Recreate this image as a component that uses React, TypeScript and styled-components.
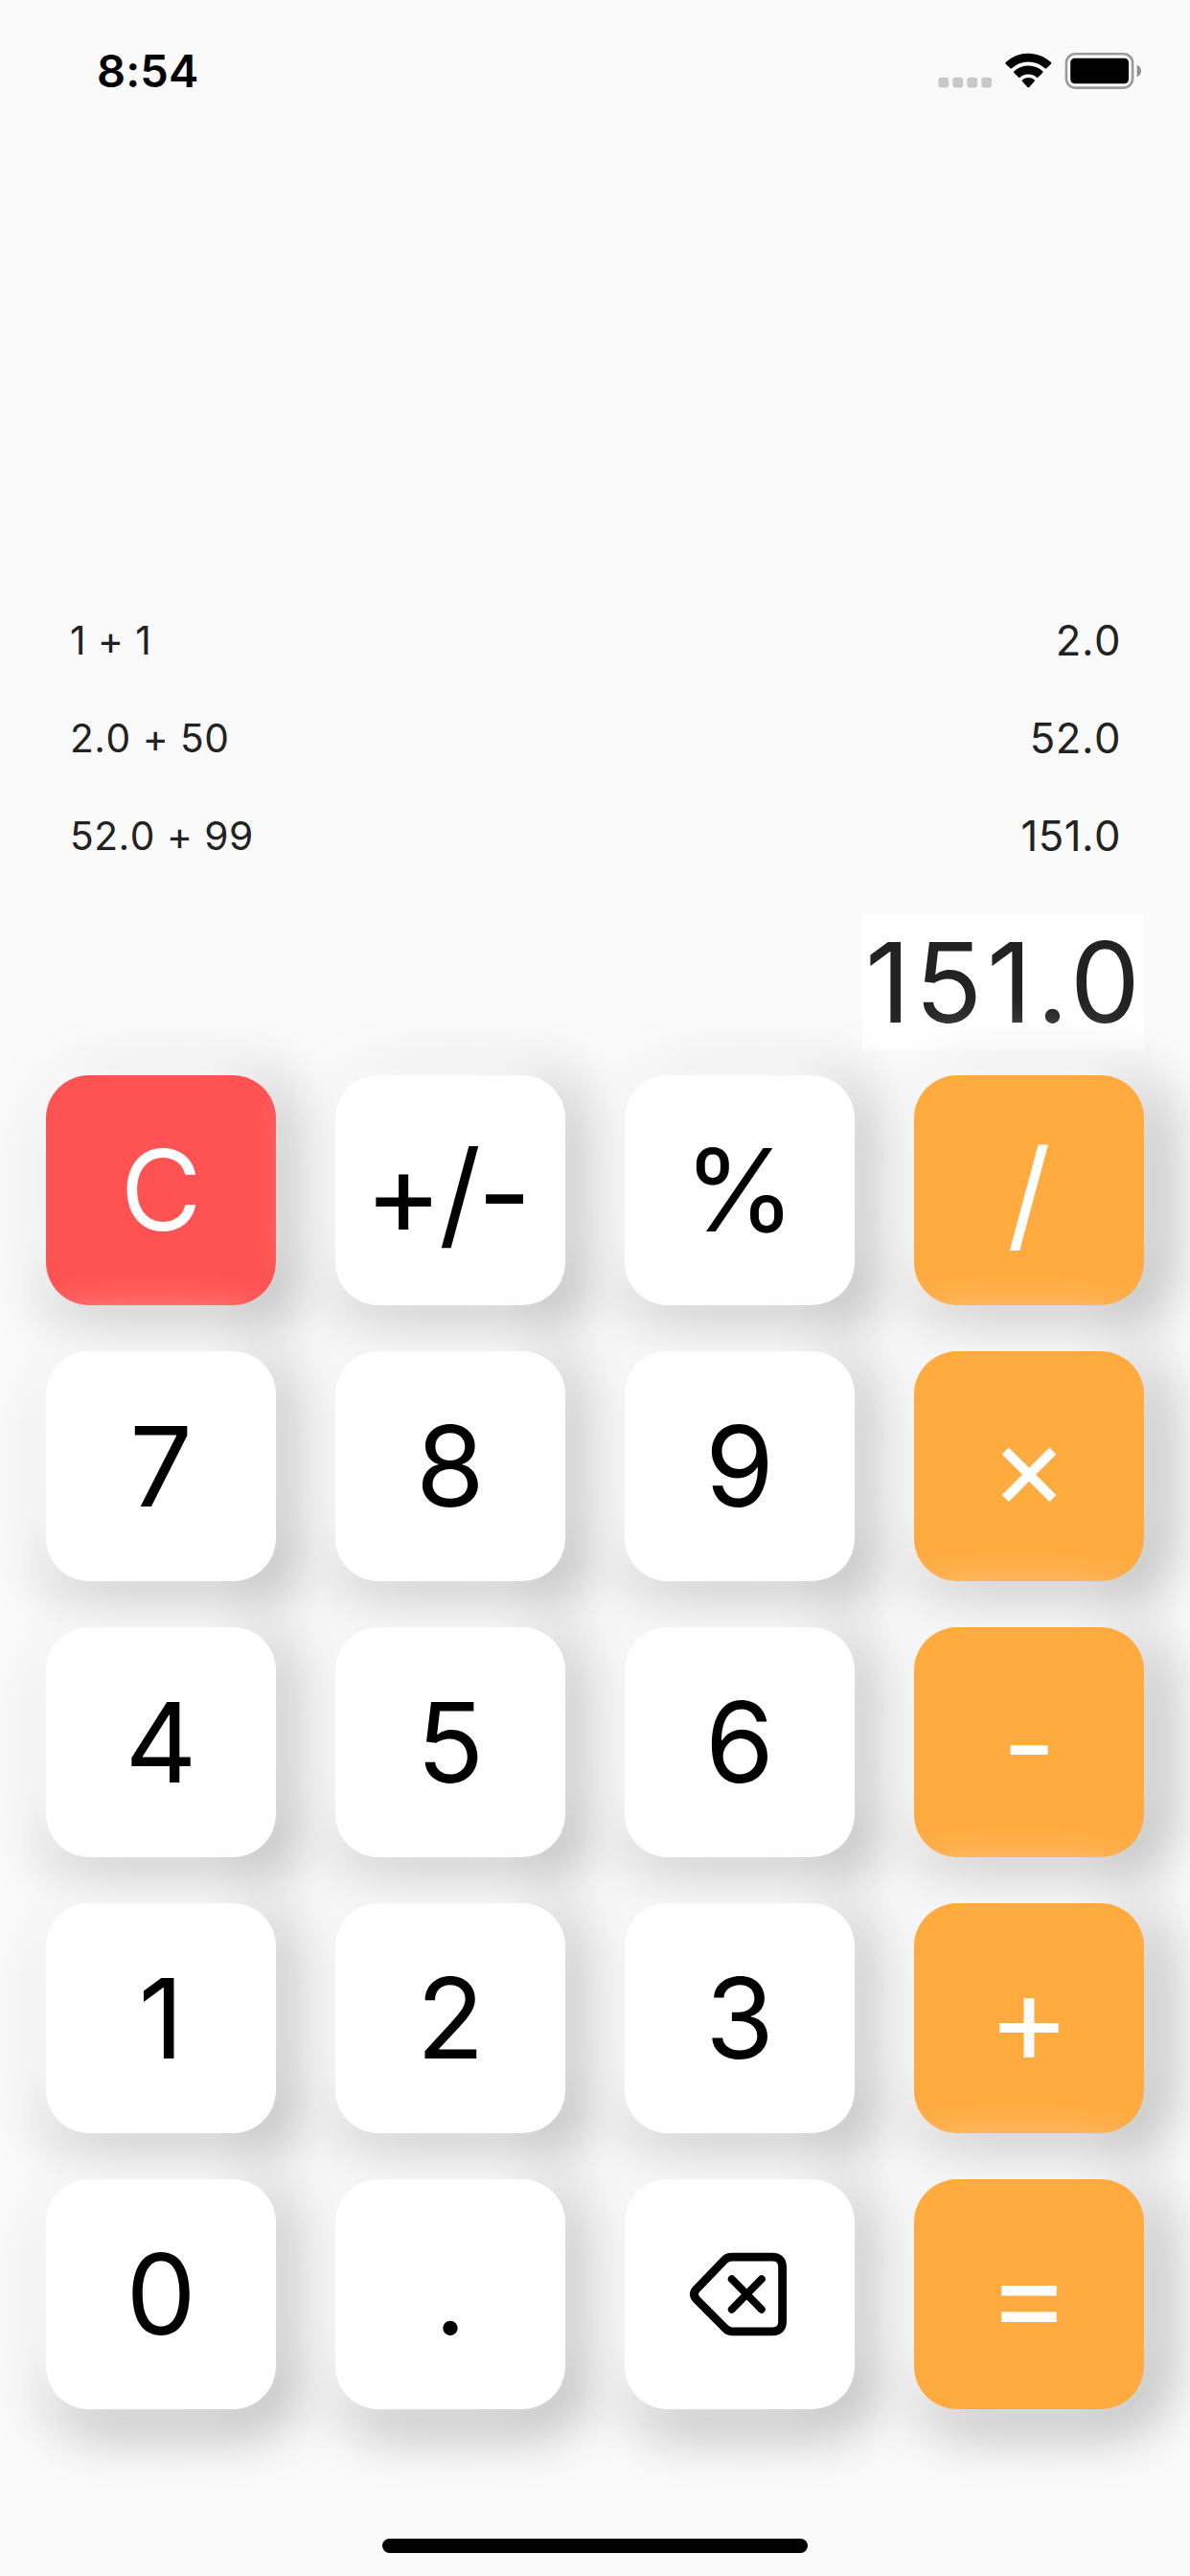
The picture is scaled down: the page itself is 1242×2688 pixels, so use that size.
import React from "react";
import styled, { createGlobalStyle, css } from "styled-components";

const GlobalStyle = createGlobalStyle`
  body {
    margin: 0;
    background: #fafafa;
  }
`;

const Screen = styled.div`
  display: flex;
  flex-direction: column;
  width: 1242px;
  height: 2688px;
  overflow: hidden;
  background: #fafafa;
  color: #222;
  font-family: Inter, "Liberation Sans", sans-serif;
`;

const StatusBar = styled.header`
  display: flex;
  flex: none;
  justify-content: space-between;
  height: 132px;
  padding: 0 51px 0 101px;
  box-sizing: border-box;
`;

const Clock = styled.time`
  padding-top: 45px;
  font-size: 47px;
  font-weight: 600;
  line-height: 58px;
  letter-spacing: 0.1px;
  color: #000;
`;

const StatusIcons = styled.div`
  padding-top: 54px;
  height: 40px;
`;

const History = styled.section`
  display: flex;
  flex: 1;
  flex-direction: column;
  justify-content: flex-end;
  padding: 0 72px 30px 73px;
`;

const HistoryRow = styled.div`
  display: flex;
  align-items: center;
  justify-content: space-between;
  height: 102px;
`;

const Expression = styled.span`
  font-size: 40.7px;
  letter-spacing: 0.5px;
  font-kerning: none;
`;

const Result = styled.span`
  font-size: 43.6px;
  letter-spacing: 0.5px;
  font-kerning: none;
`;

const Display = styled.div`
  flex: none;
  align-self: flex-end;
  width: 294px;
  height: 143px;
  margin: 0 48px 26px 0;
  padding: 1px 0 0 3px;
  box-sizing: border-box;
  background: #fff;
  font-size: 116px;
  line-height: 143px;
  letter-spacing: 4.6px;
`;

const Keypad = styled.main`
  flex: none;
  display: grid;
  grid-template-columns: repeat(4, 240px);
  grid-auto-rows: 240px;
  gap: 48px 62px;
  padding: 0 48px;
`;

type Tone = "plain" | "clear" | "operator";

const tones = {
  plain: css`
    background: #fff;
    color: #000;
  `,
  clear: css`
    background: #ff5252;
    color: #fff;
  `,
  operator: css`
    background: #ffab40;
    color: #fff;
  `,
};

const Key = styled.button<{ $tone: Tone }>`
  display: flex;
  align-items: center;
  justify-content: center;
  padding: 0;
  border: 0;
  border-radius: 45px;
  font: inherit;
  line-height: 140px;
  white-space: nowrap;
  box-shadow:
    -12px -12px 57px 8px #fff,
    12px 12px 57px 8px #a6a6a6;
  ${({ $tone }) => tones[$tone]}
`;

const Glyph = styled.span<{ $size?: number; $spacing?: number; $nudge?: string }>`
  font-size: ${({ $size = 116 }) => $size}px;
  letter-spacing: ${({ $spacing = 0 }) => $spacing}px;
  margin: ${({ $nudge = "0" }) => $nudge};
`;

const HomeArea = styled.footer`
  flex: none;
  display: flex;
  justify-content: center;
  align-items: flex-end;
  height: 174px;
  padding-bottom: 24px;
  box-sizing: border-box;
`;

const HomeIndicator = styled.div`
  width: 444px;
  height: 15px;
  border-radius: 8px;
  background: #000;
`;

const StatusGlyphs = () => (
  <svg width="212" height="40" viewBox="979 54 212 40" fill="none">
    {[979.3, 994.3, 1009.3, 1024.3].map((x) => (
      <rect key={x} x={x} y="80.8" width="10.8" height="10.8" rx="3" fill="#c8c8c8" />
    ))}
    <g fill="#000">
      <path d="M1073.3 55.7c9.1 0 17.4 3.5 23.6 9.3.5.5.5 1.200 0 1.700l-4.600 4.600c-.4.400-1.100.4-1.600 0a25.400 25.400 0 0 0-34.800 0c-.5.400-1.200.4-1.600 0l-4.600-4.600c-.5-.5-.5-1.200 0-1.700a34.500 34.500 0 0 1 23.600-9.300Z" />
      <path d="M1073.3 68.6c5.700 0 10.900 2.200 14.900 5.700.5.500.5 1.200 0 1.700l-4.600 4.600c-.5.500-1.100.5-1.600.1a13.200 13.200 0 0 0-17.400 0c-.5.400-1.200.4-1.600-.1l-4.600-4.600c-.5-.5-.5-1.200 0-1.700a22.500 22.500 0 0 1 14.900-5.700Z" />
      <path d="M1073.3 81.1c2.300 0 4.500.8 6.200 2.200.5.400.5 1.200.1 1.600l-5.500 6.200c-.4.500-1.200.5-1.600 0l-5.500-6.200c-.4-.4-.4-1.200.1-1.600a9.800 9.800 0 0 1 6.200-2.200Z" />
    </g>
    <rect x="1112.9" y="56.2" width="69.2" height="35.4" rx="9.5" stroke="#9b9b9b" strokeWidth="2.6" />
    <rect x="1117.2" y="60.7" width="60.8" height="26.6" rx="4.5" fill="#000" />
    <path d="M1186.7 67.8c2.600 1.100 4.300 3.500 4.300 6.200s-1.700 5.100-4.300 6.200Z" fill="#8e8e8e" />
  </svg>
);

const BackspaceIcon = () => (
  <svg
    width="120"
    height="100"
    viewBox="712 2344 120 100"
    fill="none"
    stroke="#000"
    strokeWidth="8.8"
    strokeLinecap="round"
    strokeLinejoin="round"
  >
    <path d="M764.5 2355.2H806q10.600 0 10.600 10.600v56.400q0 10.600-10.600 10.600H764.500q-4.600 0-7.600-3.300L727 2399.500q-5-5.500 0-11l29.900-31q3-2.300 7.600-2.300Z" />
    <path d="M763.8 2378.2l31 31.600M794.800 2378.200l-31 31.600" strokeWidth="8" />
  </svg>
);

const history = [
  { expression: "1 + 1", result: "2.0" },
  { expression: "2.0 + 50", result: "52.0" },
  { expression: "52.0 + 99", result: "151.0" },
];

type KeySpec = {
  label: string;
  tone?: Tone;
  size?: number;
  spacing?: number;
  nudge?: string;
};

const keys: KeySpec[] = [
  { label: "C", tone: "clear" },
  { label: "+/-", size: 122, spacing: -3.5, nudge: "5px 8px 0 0" },
  { label: "%", size: 119 },
  { label: "/", tone: "operator", size: 127, nudge: "6px 0 0 0" },
  { label: "7" },
  { label: "8" },
  { label: "9" },
  { label: "×", tone: "operator", size: 123 },
  { label: "4" },
  { label: "5" },
  { label: "6" },
  { label: "-", tone: "operator", size: 122, nudge: "3px 0 0 0" },
  { label: "1" },
  { label: "2" },
  { label: "3" },
  { label: "+", tone: "operator", size: 130 },
  { label: "0" },
  { label: "." },
  { label: "backspace" },
  { label: "=", tone: "operator", size: 130 },
];

export default function App() {
  return (
    <>
      <GlobalStyle />
      <Screen>
        <StatusBar>
          <Clock>8:54</Clock>
          <StatusIcons>
            <StatusGlyphs />
          </StatusIcons>
        </StatusBar>
        <History>
          {history.map((entry) => (
            <HistoryRow key={entry.expression}>
              <Expression>{entry.expression}</Expression>
              <Result>{entry.result}</Result>
            </HistoryRow>
          ))}
        </History>
        <Display>151.0</Display>
        <Keypad>
          {keys.map(({ label, tone = "plain", size, spacing, nudge }) => (
            <Key key={label} $tone={tone}>
              {label === "backspace" ? (
                <BackspaceIcon />
              ) : (
                <Glyph $size={size} $spacing={spacing} $nudge={nudge}>
                  {label}
                </Glyph>
              )}
            </Key>
          ))}
        </Keypad>
        <HomeArea>
          <HomeIndicator />
        </HomeArea>
      </Screen>
    </>
  );
}
